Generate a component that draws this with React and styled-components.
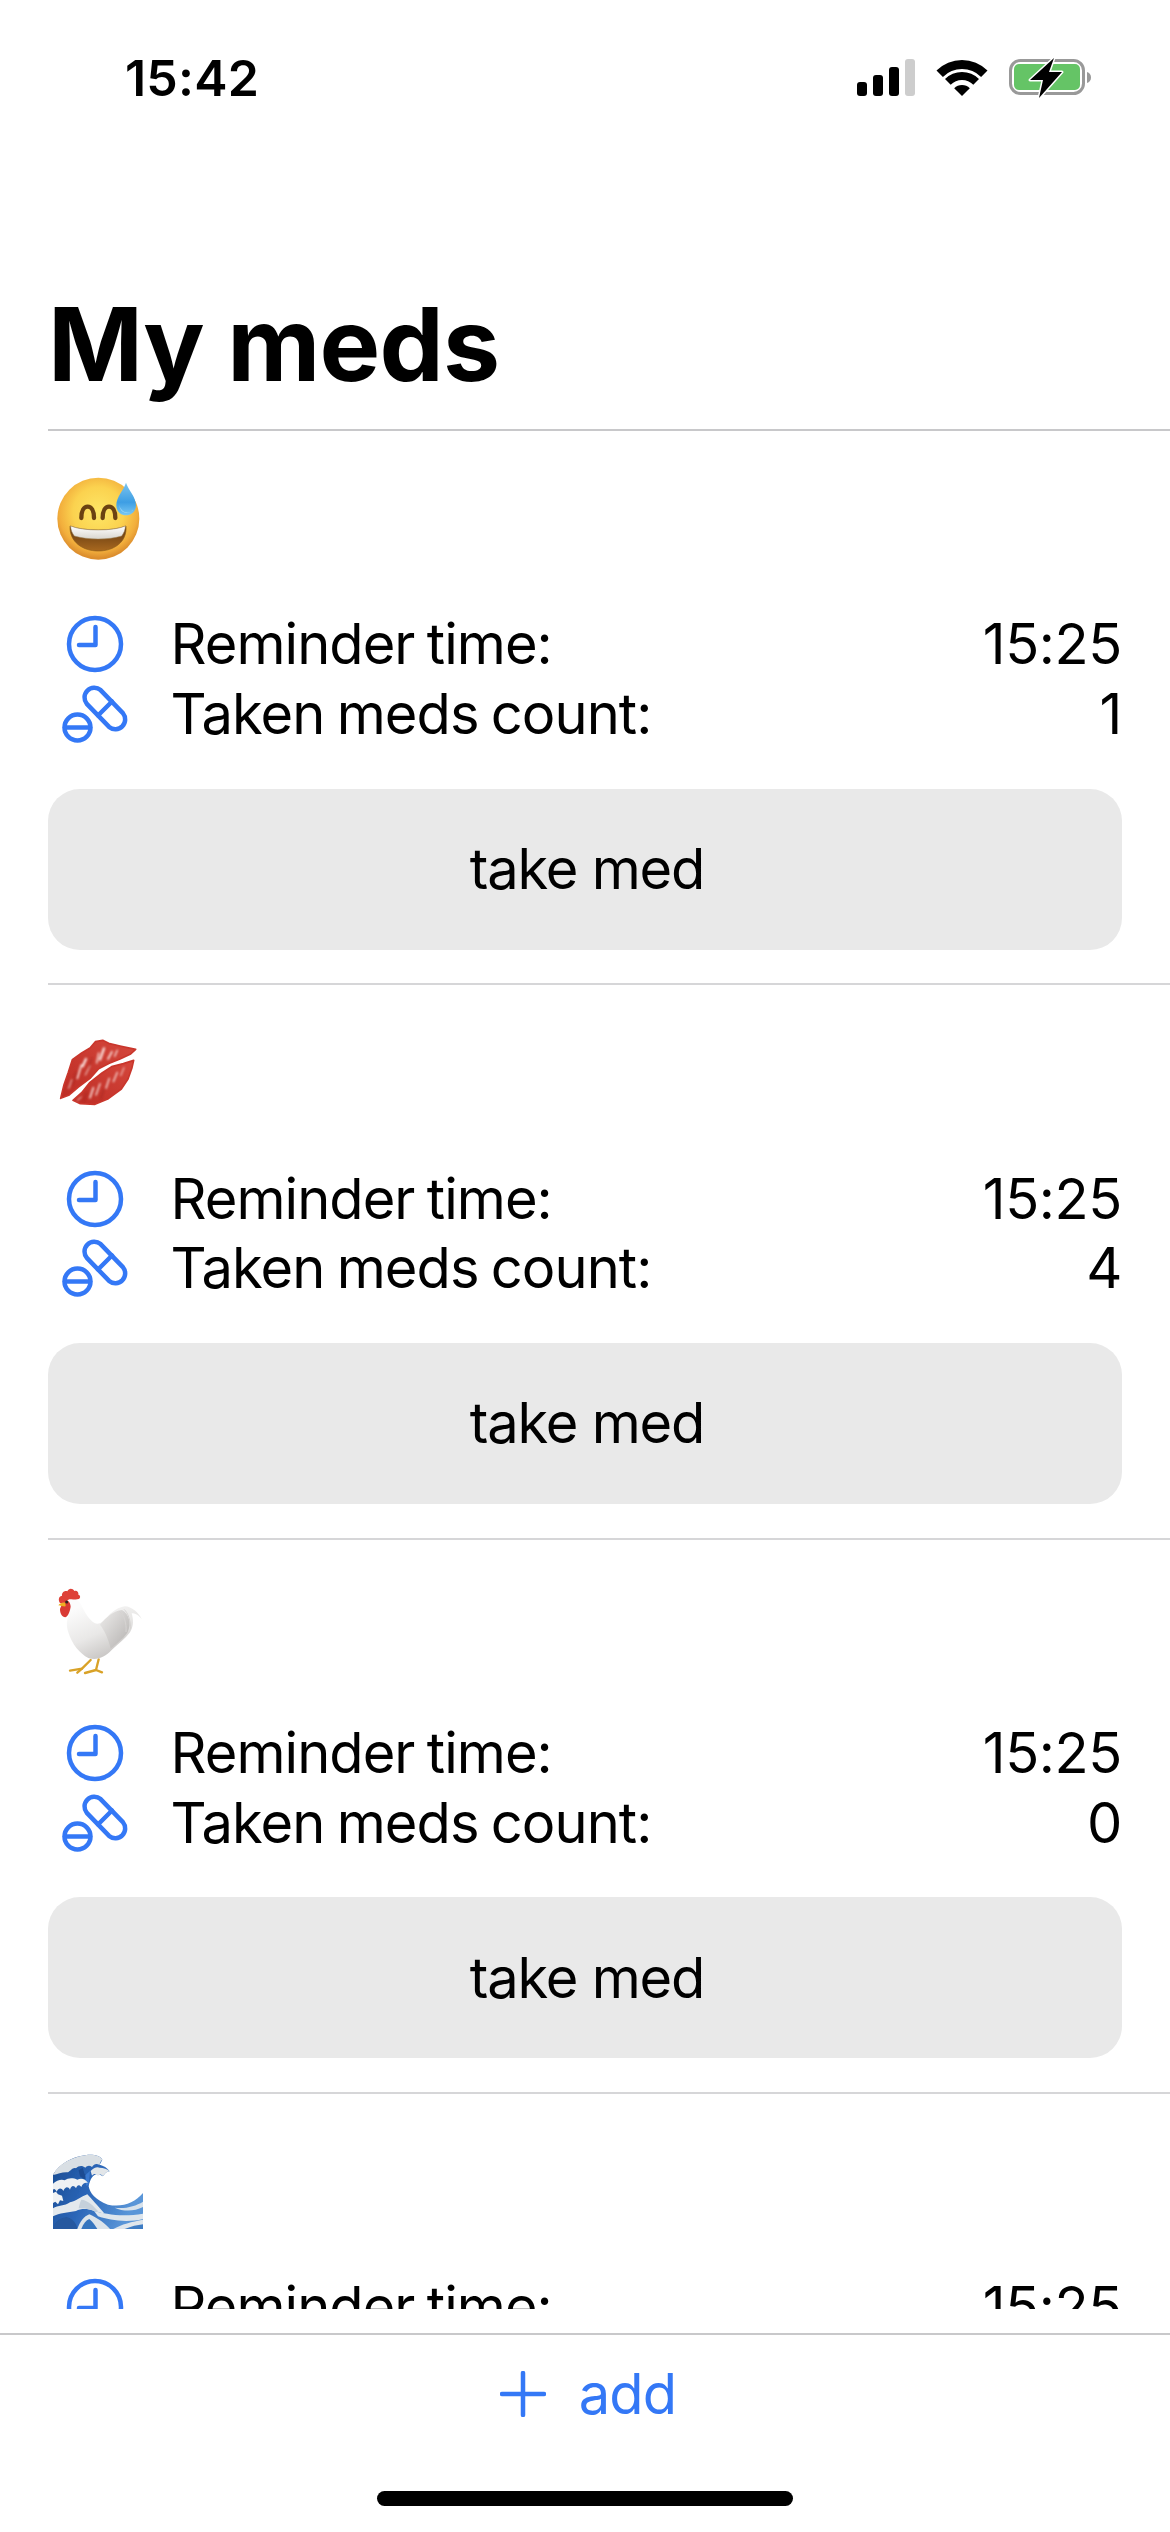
import React from "react";
import styled, { createGlobalStyle } from "styled-components";

const Global = createGlobalStyle`
  html, body { margin: 0; padding: 0; background: #fff; }
  * { box-sizing: border-box; }
`;

const Screen = styled.div`
  width: 1170px;
  height: 2532px;
  display: flex;
  flex-direction: column;
  overflow: hidden;
  background: #fff;
  color: #000;
  font-family: Inter, "Liberation Sans", sans-serif;
`;

const StatusBar = styled.div`
  height: 156px;
  flex: none;
  display: flex;
  justify-content: space-between;
  align-items: flex-start;
  padding: 50px 79px 0 125px;
`;

const Clock = styled.div`
  font-size: 50px;
  line-height: 56px;
  font-weight: 600;
  letter-spacing: 0.2px;
`;

const StatusIcons = styled.div`
  display: flex;
  align-items: flex-start;
  margin-top: 6px;
  gap: 22px;
  svg { display: block; overflow: visible; }
`;

const Title = styled.h1`
  flex: none;
  height: 273px;
  margin: 0;
  padding: 126px 0 0 48px;
  font-size: 102px;
  line-height: 124px;
  font-weight: 700;
  letter-spacing: -0.8px;
`;

const List = styled.div`
  height: 1880px;
  flex: none;
  overflow: hidden;
`;

const Card = styled.section`
  height: 554.4px;
  margin-left: 48px;
  padding: 44px 48px 0 0;
  border-top: 2px solid #d6d6d8;
  &:first-child { border-top-color: #c8c8ca; }
`;

const EmojiBox = styled.div`
  width: 96px;
  height: 96px;
  margin-bottom: 38.5px;
  svg { display: block; overflow: visible; }
`;

const InfoRow = styled.div`
  height: 69.5px;
  display: flex;
  align-items: center;
`;

const InfoIcon = styled.div`
  width: 93px;
  margin-right: 29.5px;
  flex: none;
  display: flex;
  justify-content: center;
  svg { display: block; }
`;

const InfoLabel = styled.span`
  flex: 1;
  font-size: 56px;
  line-height: 68px;
  letter-spacing: -0.95px;
  word-spacing: -2.5px;
`;

const InfoValue = styled.span`
  font-size: 56px;
  line-height: 68px;
  letter-spacing: -0.4px;
`;

const TakeButton = styled.button`
  display: block;
  width: 100%;
  height: 161px;
  margin-top: 40px;
  border: 0;
  border-radius: 32px;
  background: #e9e9e9;
  color: #000;
  font-family: inherit;
  font-size: 56px;
  letter-spacing: -1.2px;
  padding: 0 0 0 4px;
`;

const Footer = styled.footer`
  flex: 1;
  margin-top: 24px;
  border-top: 2px solid #c8c8ca;
  display: flex;
  flex-direction: column;
  align-items: center;
`;

const AddButton = styled.button`
  margin: 21px 0 0 6px;
  display: flex;
  align-items: center;
  gap: 33px;
  height: 76px;
  padding: 0;
  border: 0;
  background: none;
  color: #3478f6;
  font-family: inherit;
  font-size: 56px;
  letter-spacing: -0.9px;
  svg { display: block; }
`;

const HomeBar = styled.div`
  width: 416px;
  height: 15px;
  margin-top: 59px;
  border-radius: 8px;
  background: #000;
`;

const Signal = () => (
  <svg width="58" height="40" viewBox="0 0 58 40">
    <rect x="0" y="26" width="10" height="14" rx="3" />
    <rect x="16" y="19" width="10" height="21" rx="3" />
    <rect x="32" y="11" width="10" height="29" rx="3" />
    <rect x="48" y="3" width="10" height="37" rx="3" fill="#cdcdcd" />
  </svg>
);

const Wifi = () => (
  <svg width="50" height="40" viewBox="0 0 50 40">
    <path d="M-.5 14.500A36 36 0 0 1 50.500 14.500L44.100 20.900A27 27 0 0 0 5.900 20.900z" />
    <path d="M8 23A24 24 0 0 1 42 23L36.300 28.700A16 16 0 0 0 13.700 28.700z" />
    <path d="M17.200 32.200A11 11 0 0 1 32.800 32.200L25 40z" />
  </svg>
);

const Battery = () => (
  <svg width="82" height="44" viewBox="0 0 82 44">
    <rect x="1.500" y="4.500" width="73" height="33" rx="10" fill="none" stroke="#999" strokeWidth="3" />
    <rect x="5" y="8" width="66" height="26" rx="5" fill="#65c466" />
    <path d="M78 16c2.500.8 4 2.500 4 5.500S80.500 26.200 78 27z" fill="#999" />
    <path d="M45 2 21 24h13l-4 18 23-26H40z" fill="#000" stroke="#fff" strokeWidth="3" strokeLinejoin="round" paintOrder="stroke" />
  </svg>
);

const ClockIcon = () => (
  <svg width="58" height="58" viewBox="0 0 58 58" fill="none" stroke="#3478f6" strokeWidth="4.500" strokeLinecap="round" strokeLinejoin="round">
    <circle cx="29" cy="29" r="26" />
    <path d="M29.500 12v18H13" />
  </svg>
);

const PillsIcon = () => (
  <svg width="66" height="58" viewBox="0 0 66 58" fill="none" stroke="#3478f6" strokeWidth="4.500" strokeLinecap="round" strokeLinejoin="round">
    <circle cx="15.500" cy="42.500" r="13" />
    <path d="M3 42.500h25" />
    <path d="M38.600 5.100 60.900 28.100A9.800 9.800 0 0 1 47.100 41.900L24.800 18.900A9.800 9.800 0 0 1 38.600 5.100z" />
    <path d="M36 30.500 50 16.500" />
  </svg>
);

const Plus = () => (
  <svg width="46" height="46" viewBox="0 0 46 46" fill="none" stroke="#3478f6" strokeWidth="4.500" strokeLinecap="round">
    <path d="M23 2v42M2 23h42" />
  </svg>
);

const Smiley = () => (
  <svg width="96" height="96" viewBox="24 39 288 288">
    <defs>
      <radialGradient id="sm-face" cx="50%" cy="42%" r="56%">
        <stop offset="0%" stopColor="#fde666" />
        <stop offset="55%" stopColor="#fbd24f" />
        <stop offset="85%" stopColor="#f2ae3c" />
        <stop offset="100%" stopColor="#dc8e2e" />
      </radialGradient>
      <linearGradient id="sm-drop" x1="0" y1="0" x2="0" y2="1">
        <stop offset="0%" stopColor="#7cc4ee" />
        <stop offset="60%" stopColor="#3d9ee4" />
        <stop offset="100%" stopColor="#7ac8f4" />
      </linearGradient>
      <linearGradient id="sm-mouth" x1="0" y1="0" x2="0" y2="1">
        <stop offset="0%" stopColor="#5e3610" />
        <stop offset="100%" stopColor="#a8681f" />
      </linearGradient>
      <linearGradient id="sm-teeth" x1="0" y1="0" x2="0" y2="1">
        <stop offset="0%" stopColor="#ffffff" />
        <stop offset="100%" stopColor="#d9d6cf" />
      </linearGradient>
    </defs>
    <circle cx="175" cy="170" r="123" fill="url(#sm-face)" />
    <path d="M90 192C130 208 220 208 258 192 262 240 222 267 175 267S88 240 90 192z" fill="url(#sm-mouth)" stroke="#8b5a1a" strokeWidth="2" />
    <path d="M92 192C130 208 220 208 256 192 256 204 251 214 245 222 205 234 145 234 103 222 97 214 92 204 92 192z" fill="url(#sm-teeth)" stroke="#a08a62" strokeWidth="1.500" />
    <path d="M124 168C124 146 132 134 143 134S162 146 162 168" fill="none" stroke="#6b4212" strokeWidth="13" strokeLinecap="round" />
    <path d="M188 168C188 146 196 134 207 134S226 146 226 168" fill="none" stroke="#6b4212" strokeWidth="13" strokeLinecap="round" />
    <path d="M258 62C264 82 288 105 288 130 288 147 275 160 258 160S229 147 229 130C229 105 252 82 258 62z" fill="url(#sm-drop)" />
    <path d="M238 128C240 142 250 152 262 152 270 152 276 148 280 142 272 158 240 158 238 128z" fill="#c9eefc" />
  </svg>
);

const Lips = () => (
  <svg width="96" height="96" viewBox="24 20 288 288">
    <defs>
      <linearGradient id="lp-a" x1="0" y1="1" x2="1" y2="0">
        <stop offset="0%" stopColor="#bd2c24" />
        <stop offset="100%" stopColor="#d5473c" />
      </linearGradient>
      <filter id="lp-blur" x="-10%" y="-10%" width="120%" height="120%">
        <feGaussianBlur stdDeviation="2.400" />
      </filter>
    </defs>
    <g stroke="#c9362c" strokeWidth="5" strokeLinejoin="round" fill="url(#lp-a)">
      <path d="M62 228 72 187 85 150 97 112 125 92 150 77 166 58 188 54 206 63 240 71 287 81 272 95 240 110 208 123 176 139 150 168 115 194 86 219z" />
      <path d="M99 234 125 211 150 180 186 152 215 133 250 124 281 114 276 136 264 170 244 200 205 229 165 246 121 244z" />
    </g>
    <g stroke="#fbe3df" strokeLinecap="round" fill="none" filter="url(#lp-blur)">
      <path d="M124 128 112 168" strokeWidth="5" />
      <path d="M138 110 128 132" strokeWidth="7" />
      <path d="M150 130 136 158" strokeWidth="3" />
      <path d="M176 92 170 122" strokeWidth="4" />
      <path d="M192 78 180 112" strokeWidth="7" />
      <path d="M216 88 204 110" strokeWidth="5" />
      <path d="M232 84 224 102" strokeWidth="4" />
      <path d="M96 172 86 198" strokeWidth="3" />
      <path d="M160 196 150 226" strokeWidth="5" />
      <path d="M180 184 168 218" strokeWidth="4" />
      <path d="M208 168 198 198" strokeWidth="4" />
      <path d="M232 150 220 178" strokeWidth="4" />
      <path d="M252 136 242 160" strokeWidth="3" />
      <path d="M124 224 112 234" strokeWidth="3" />
    </g>
    <g stroke="#8f1c16" strokeLinecap="round" fill="none" opacity="0.450" filter="url(#lp-blur)">
      <path d="M108 150 98 186" strokeWidth="4" />
      <path d="M156 108 146 136" strokeWidth="4" />
      <path d="M140 210 132 236" strokeWidth="4" />
      <path d="M192 200 182 230" strokeWidth="4" />
    </g>
  </svg>
);

const Rooster = () => (
  <svg width="96" height="96" viewBox="24 60 288 288">
    <defs>
      <linearGradient id="rs-body" x1="0.200" y1="0.100" x2="0.700" y2="1">
        <stop offset="0%" stopColor="#fcfcfc" />
        <stop offset="50%" stopColor="#e9e8e7" />
        <stop offset="100%" stopColor="#bfbcba" />
      </linearGradient>
      <linearGradient id="rs-wing" x1="0" y1="0" x2="1" y2="1">
        <stop offset="0%" stopColor="#eeedec" />
        <stop offset="100%" stopColor="#b3b0ae" />
      </linearGradient>
      <filter id="rs-blur" x="-10%" y="-10%" width="120%" height="120%">
        <feGaussianBlur stdDeviation="1.500" />
      </filter>
    </defs>
    <g stroke="#d9a227" strokeWidth="7" strokeLinecap="round" strokeLinejoin="round" fill="none">
      <path d="M152 288 126 314 90 320" />
      <path d="M126 314 112 326" />
      <path d="M176 286 168 318 135 327" />
      <path d="M168 318 186 325" />
    </g>
    <path d="M85 108C100 100 118 108 125 125 135 145 145 165 165 178 180 182 190 172 205 155 220 140 235 130 255 127 275 128 295 145 305 165 295 152 285 148 275 148 280 165 282 185 270 205 255 225 235 240 215 258 195 280 170 290 145 282 120 270 95 240 85 205 78 185 80 165 88 150z" fill="url(#rs-body)" />
    <path d="M180 182C198 160 222 140 246 138 268 150 276 180 262 206 248 226 228 240 212 254 206 226 194 200 180 182z" fill="url(#rs-wing)" filter="url(#rs-blur)" />
    <path d="M252 136C264 146 272 170 272 196M238 142C252 152 260 176 258 204" stroke="#d6d4d2" strokeWidth="3" fill="none" filter="url(#rs-blur)" />
    <path d="M58 114C54 104 58 96 66 96 64 86 74 78 82 82 86 72 98 72 103 81 110 78 117 84 115 92 122 94 122 102 116 105 106 108 96 104 88 106 78 110 72 118 64 118 61 118 59 116 58 114z" fill="#de4138" />
    <path d="M74 108C84 106 92 116 92 128 90 140 86 156 76 160 66 160 60 148 60 136 62 128 66 122 74 108z" fill="#d93a34" />
    <path d="M76 116C68 115 60 118 55 124 62 125 70 128 77 127z" fill="#eeb022" />
    <circle cx="80" cy="114" r="4.500" fill="#2e2320" />
  </svg>
);

const Wave = () => (
  <svg width="96" height="96" viewBox="0 -15 288 288">
    <defs>
      <linearGradient id="wv-a" x1="0" y1="0" x2="1" y2="0.400">
        <stop offset="0%" stopColor="#1a4a90" />
        <stop offset="50%" stopColor="#2b66b8" />
        <stop offset="100%" stopColor="#5a96d8" />
      </linearGradient>
      <filter id="wv-blur" x="-5%" y="-5%" width="110%" height="110%">
        <feGaussianBlur stdDeviation="1.200" />
      </filter>
    </defs>
    <g filter="url(#wv-blur)">
      <path d="M15 95C35 62 70 42 115 36 140 34 158 39 163 50L155 65C166 68 178 74 185 85 175 86 170 92 165 100L150 92C135 94 126 108 122 130 126 150 140 170 180 185 222 194 260 180 285 150V258H15z" fill="url(#wv-a)" />
      <path d="M15 96C30 64 70 42 115 36 140 34 158 39 163 50 158 54 155 60 155 66 146 60 138 62 132 72 124 66 118 68 112 74 102 66 92 68 84 76 74 72 68 84 60 88 46 86 30 92 15 96z" fill="#d9dfe4" />
      <path d="M128 84C136 74 148 70 155 74 166 74 178 78 185 85 176 86 170 92 165 100 160 94 154 92 150 100 146 92 138 90 132 98z" fill="#e2e6e9" />
      <path d="M92 82 104 74 110 94 118 96 122 110 108 108 96 100z" fill="#1c4c92" />
      <path d="M112 96 126 84 122 126 114 128z" fill="#3a7ad0" />
      <path d="M15 122C26 112 40 108 50 112 60 104 76 104 88 110 100 104 112 108 120 120 110 118 104 122 100 132 94 124 88 124 84 136 78 126 70 126 66 140 60 130 52 130 46 144 40 134 32 134 26 146 22 138 18 136 15 140z" fill="#eef1f3" />
      <path d="M15 150 24 146 30 154 42 158 46 174 36 172 30 184 22 176 15 180z" fill="#f1f3f4" />
      <path d="M15 196C30 186 50 190 66 178 82 176 100 160 118 154 130 166 150 190 170 212 158 210 146 206 138 204 118 196 100 196 84 204 60 208 34 210 15 220z" fill="#e4e9ed" />
      <path d="M100 170C118 170 138 190 152 206 130 202 110 194 92 196 94 186 96 178 100 170z" fill="#c5d0db" />
      <path d="M138 204C170 212 220 224 285 212V228C238 240 184 232 150 220z" fill="#dfe6ec" />
      <path d="M285 176C262 190 232 198 200 194 226 206 258 206 285 192z" fill="#d8e2eb" />
      <path d="M15 258C18 238 34 224 56 222 74 226 86 242 88 258z" fill="#25599f" />
      <path d="M88 258C96 236 108 220 124 214 150 226 172 242 186 258z" fill="#dce4ea" />
      <path d="M100 258C106 242 114 232 124 228 134 236 142 248 148 258z" fill="#3674bf" />
      <path d="M196 258C220 244 252 236 285 230V258z" fill="#dfe6ec" />
      <path d="M230 258C250 250 268 246 285 244V258z" fill="#3e7cc4" />
    </g>
  </svg>
);

const meds = [
  { id: "a", Emoji: Smiley, count: 1 },
  { id: "b", Emoji: Lips, count: 4 },
  { id: "c", Emoji: Rooster, count: 0 },
  { id: "d", Emoji: Wave, count: 2 },
];

export default function App() {
  return (
    <Screen>
      <Global />
      <StatusBar>
        <Clock>15:42</Clock>
        <StatusIcons>
          <Signal />
          <Wifi />
          <Battery />
        </StatusIcons>
      </StatusBar>
      <Title>My meds</Title>
      <List>
        {meds.map(({ id, Emoji, count }) => (
          <Card key={id}>
            <EmojiBox>
              <Emoji />
            </EmojiBox>
            <InfoRow>
              <InfoIcon><ClockIcon /></InfoIcon>
              <InfoLabel>Reminder time:</InfoLabel>
              <InfoValue>15:25</InfoValue>
            </InfoRow>
            <InfoRow>
              <InfoIcon><PillsIcon /></InfoIcon>
              <InfoLabel>Taken meds count:</InfoLabel>
              <InfoValue>{count}</InfoValue>
            </InfoRow>
            <TakeButton>take med</TakeButton>
          </Card>
        ))}
      </List>
      <Footer>
        <AddButton>
          <Plus />
          <span>add</span>
        </AddButton>
        <HomeBar />
      </Footer>
    </Screen>
  );
}
